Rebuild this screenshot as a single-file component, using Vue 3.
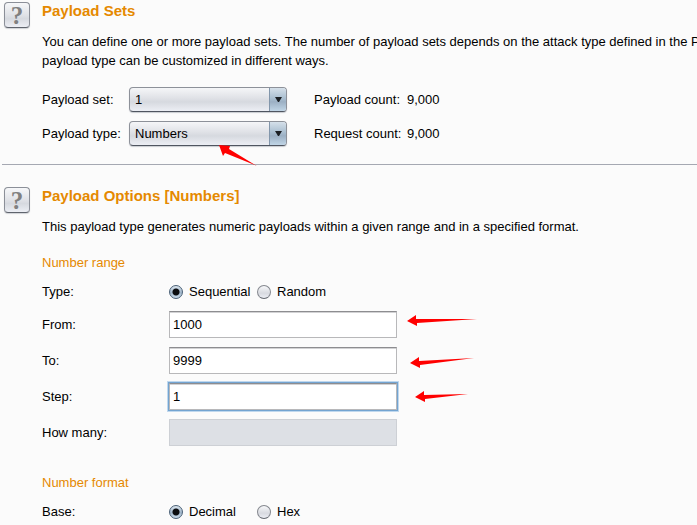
<script setup>
import { reactive } from 'vue'

const form = reactive({
  set: '1',
  type: 'Numbers',
  order: 'sequential',
  from: '1000',
  to: '9999',
  step: '1',
  howMany: '',
  base: 'decimal',
})

const arrows = [
  '219,145 230,146 229,149 257,166 225,153 223,156',
  '407,321 416,315 416,319 477,319 417,323 417,326',
  '410,363 419,357 419,361 474,358 420,365 420,368',
  '415,397 424,391 424,395 468,394 425,399 425,402',
]
</script>

<template>
  <main class="page">
    <section class="section">
      <button class="help" type="button" aria-label="Help">?</button>
      <div class="body">
        <h2 class="title">Payload Sets</h2>
        <p class="text">
          You can define one or more payload sets. The number of payload sets depends on the attack type defined in the P<br />
          payload type can be customized in different ways.
        </p>
        <div class="sets">
          <label for="set">Payload set:</label>
          <div class="combo">
            <select id="set" v-model="form.set"><option>1</option></select>
            <span class="drop"><svg width="7" height="5" viewBox="0 0 7 5"><path d="M0 0h7L4 5H3z" fill="#1c2025" /></svg></span>
          </div>
          <span class="count">Payload count:</span>
          <span>9,000</span>
          <label for="type">Payload type:</label>
          <div class="combo">
            <select id="type" v-model="form.type"><option>Numbers</option></select>
            <span class="drop"><svg width="7" height="5" viewBox="0 0 7 5"><path d="M0 0h7L4 5H3z" fill="#1c2025" /></svg></span>
          </div>
          <span class="count">Request count:</span>
          <span>9,000</span>
        </div>
      </div>
    </section>

    <hr class="rule" />

    <section class="section options">
      <button class="help" type="button" aria-label="Help">?</button>
      <div class="body">
        <h2 class="title">Payload Options [Numbers]</h2>
        <p class="text">This payload type generates numeric payloads within a given range and in a specified format.</p>

        <h3 class="subtitle">Number range</h3>
        <div class="row" role="radiogroup" aria-labelledby="order-label">
          <span id="order-label">Type:</span>
          <div class="radios">
            <label class="radio"><input v-model="form.order" type="radio" name="order" value="sequential" />Sequential</label>
            <label class="radio"><input v-model="form.order" type="radio" name="order" value="random" />Random</label>
          </div>
        </div>
        <div class="fields">
          <div class="row">
            <label for="from">From:</label>
            <input id="from" v-model="form.from" class="field" type="text" />
          </div>
          <div class="row">
            <label for="to">To:</label>
            <input id="to" v-model="form.to" class="field" type="text" />
          </div>
          <div class="row">
            <label for="step">Step:</label>
            <input id="step" v-model="form.step" class="field active" type="text" />
          </div>
          <div class="row">
            <label for="how-many">How many:</label>
            <input id="how-many" v-model="form.howMany" class="field" type="text" disabled />
          </div>
        </div>

        <h3 class="subtitle format">Number format</h3>
        <div class="row" role="radiogroup" aria-labelledby="base-label">
          <span id="base-label">Base:</span>
          <div class="radios">
            <label class="radio"><input v-model="form.base" type="radio" name="base" value="decimal" />Decimal</label>
            <label class="radio"><input v-model="form.base" type="radio" name="base" value="hex" />Hex</label>
          </div>
        </div>
      </div>
    </section>

    <svg class="marks" width="480" height="410" viewBox="0 0 480 410" aria-hidden="true">
      <polygon v-for="points in arrows" :key="points" :points="points" fill="#ff0000" />
    </svg>
  </main>
</template>

<style>
body {
  background: #fbfbfb;
}
</style>

<style scoped>
.page {
  position: relative;
  overflow: hidden;
  padding-bottom: 4px;
  font: 13px/19px "Liberation Sans", Arial, sans-serif;
  color: #000;
}
.section {
  display: grid;
  grid-template-columns: 26px minmax(0, 1fr);
  column-gap: 12px;
  padding: 1px 0 18px 4px;
}
.options {
  padding-top: 21px;
  padding-bottom: 0;
}
.help {
  box-sizing: border-box;
  width: 26px;
  height: 26px;
  margin: 1px 0 0;
  padding: 0;
  border: 1px solid #8b8f98;
  border-bottom-color: #5f646d;
  border-radius: 4px;
  background: linear-gradient(#f6f7f9, #e0e2e7 50%, #d6d9df 65%, #eceef4);
  box-shadow: 0 1px 1px #d0d2d6;
  color: #808080;
  font: bold 25px/26px "Liberation Serif", "Times New Roman", serif;
}
.title {
  margin: 0 0 11px;
  font-size: 15px;
  line-height: 20px;
  color: #e58900;
}
.text {
  margin: 0 0 17px;
  white-space: nowrap;
}
.sets {
  display: grid;
  grid-template-columns: 87px 158px 120px 1fr;
  row-gap: 9px;
  align-items: center;
}
.count {
  padding-left: 27px;
}
.combo {
  display: grid;
  grid-template-columns: minmax(0, 1fr) 17px;
  box-sizing: border-box;
  height: 25px;
  overflow: hidden;
  border: 1px solid #8d9199;
  border-bottom-color: #4f5560;
  border-radius: 4px;
  background: linear-gradient(#f5f6f8, #dfe1e6 45%, #d6d9df 60%, #eceef4);
  box-shadow: 0 1px 1px #c8cbd0;
}
.combo select {
  appearance: none;
  width: 100%;
  margin: 0;
  padding: 0 5px;
  border: 0;
  background: none;
  font: inherit;
  color: inherit;
  outline: none;
}
.drop {
  display: flex;
  align-items: center;
  justify-content: center;
  border-left: 1px solid #8296ab;
  background: linear-gradient(#d5e0ea, #a9bed0 45%, #9cb0c4 60%, #c0d5e6);
  pointer-events: none;
}
.rule {
  height: 1px;
  margin: 0 0 0 2px;
  border: 0;
  background: #a5a8b2;
}
.subtitle {
  margin: 0 0 10px;
  font-size: 13px;
  font-weight: normal;
  color: #e58900;
}
.format {
  margin-top: 27px;
}
.row {
  display: grid;
  grid-template-columns: 127px 228px;
  align-items: center;
}
.radios {
  display: grid;
  grid-template-columns: 88px auto;
}
.radio {
  display: flex;
  align-items: center;
  gap: 6px;
}
.radio input {
  appearance: none;
  box-sizing: border-box;
  width: 14px;
  height: 14px;
  margin: 0;
  border: 1px solid #85888f;
  border-bottom-color: #62666e;
  border-radius: 50%;
  background: linear-gradient(#f7f8fa, #d8dae0 60%, #eceef4);
}
.radio input:checked {
  border-color: #4a6076;
  background:
    radial-gradient(circle, #0b0d10 3px, transparent 4px),
    linear-gradient(#dce6ef, #9fb4c8 55%, #c9dcec);
}
.fields {
  display: grid;
  row-gap: 9px;
  margin-top: 10px;
}
.field {
  box-sizing: border-box;
  width: 100%;
  height: 27px;
  margin: 0;
  padding: 0 3px;
  border: 1px solid #b8b8ba;
  border-top-color: #8d8d90;
  background: #fff;
  box-shadow: inset 0 1px 0 #d2d2d4;
  font: inherit;
  color: inherit;
  outline: none;
}
.field.active {
  box-shadow: inset 0 1px 0 #d2d2d4, 0 0 0 1px #73a4d1, 0 0 0 2px #c0d8ee;
}
.field:disabled {
  border-color: #cdd0d5;
  background: #dde0e5;
  box-shadow: none;
}
.marks {
  position: absolute;
  top: 0;
  left: 0;
  pointer-events: none;
}
</style>
